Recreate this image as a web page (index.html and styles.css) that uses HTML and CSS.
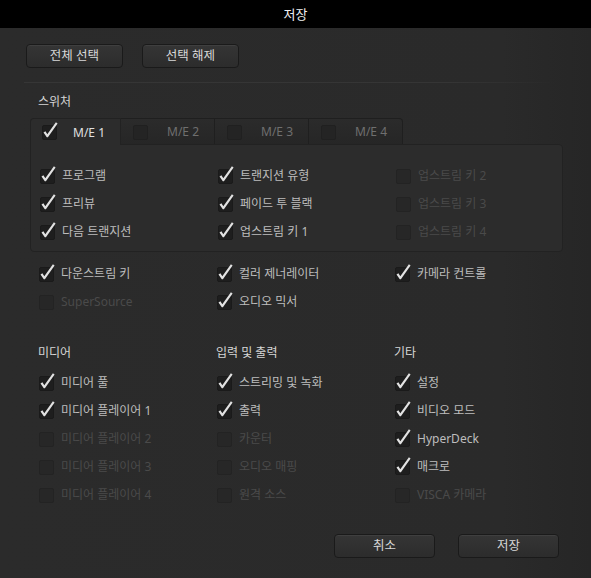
FILE: index.html
```html
<!DOCTYPE html>
<html lang="ko">
<head>
<meta charset="utf-8">
<title>저장</title>
<link rel="stylesheet" href="styles.css">
</head>
<body>
<div class="titlebar">저장</div>
<div class="content">
  <div class="top-buttons">
    <button class="btn">전체 선택</button>
    <button class="btn">선택 해제</button>
  </div>
  <div class="sep"></div>
  <div class="heading">스위처</div>
  <div class="tabs">
    <div class="tab active"><span class="cb on"><svg viewBox="0 0 15 15"><path d="M1.5 7.6 L3.4 6.2 L5.3 9.3 L13.9 -2.7 L15.6 -1.5 L5.9 12.2 L4.8 12.2 Z"/></svg></span><span class="tab-label">M/E 1</span></div>
    <div class="tab"><span class="cb"></span><span class="tab-label">M/E 2</span></div>
    <div class="tab"><span class="cb"></span><span class="tab-label">M/E 3</span></div>
    <div class="tab"><span class="cb"></span><span class="tab-label">M/E 4</span></div>
  </div>
  <div class="panel grid">
    <div class="item"><span class="cb on"><svg viewBox="0 0 15 15"><path d="M1.5 7.6 L3.4 6.2 L5.3 9.3 L13.9 -2.7 L15.6 -1.5 L5.9 12.2 L4.8 12.2 Z"/></svg></span><span class="label">프로그램</span></div>
    <div class="item"><span class="cb on"><svg viewBox="0 0 15 15"><path d="M1.5 7.6 L3.4 6.2 L5.3 9.3 L13.9 -2.7 L15.6 -1.5 L5.9 12.2 L4.8 12.2 Z"/></svg></span><span class="label">트랜지션 유형</span></div>
    <div class="item off"><span class="cb"></span><span class="label">업스트림 키 2</span></div>
    <div class="item"><span class="cb on"><svg viewBox="0 0 15 15"><path d="M1.5 7.6 L3.4 6.2 L5.3 9.3 L13.9 -2.7 L15.6 -1.5 L5.9 12.2 L4.8 12.2 Z"/></svg></span><span class="label">프리뷰</span></div>
    <div class="item"><span class="cb on"><svg viewBox="0 0 15 15"><path d="M1.5 7.6 L3.4 6.2 L5.3 9.3 L13.9 -2.7 L15.6 -1.5 L5.9 12.2 L4.8 12.2 Z"/></svg></span><span class="label">페이드 투 블랙</span></div>
    <div class="item off"><span class="cb"></span><span class="label">업스트림 키 3</span></div>
    <div class="item"><span class="cb on"><svg viewBox="0 0 15 15"><path d="M1.5 7.6 L3.4 6.2 L5.3 9.3 L13.9 -2.7 L15.6 -1.5 L5.9 12.2 L4.8 12.2 Z"/></svg></span><span class="label">다음 트랜지션</span></div>
    <div class="item"><span class="cb on"><svg viewBox="0 0 15 15"><path d="M1.5 7.6 L3.4 6.2 L5.3 9.3 L13.9 -2.7 L15.6 -1.5 L5.9 12.2 L4.8 12.2 Z"/></svg></span><span class="label">업스트림 키 1</span></div>
    <div class="item off"><span class="cb"></span><span class="label">업스트림 키 4</span></div>
  </div>
  <div class="grid extra">
    <div class="item"><span class="cb on"><svg viewBox="0 0 15 15"><path d="M1.5 7.6 L3.4 6.2 L5.3 9.3 L13.9 -2.7 L15.6 -1.5 L5.9 12.2 L4.8 12.2 Z"/></svg></span><span class="label">다운스트림 키</span></div>
    <div class="item"><span class="cb on"><svg viewBox="0 0 15 15"><path d="M1.5 7.6 L3.4 6.2 L5.3 9.3 L13.9 -2.7 L15.6 -1.5 L5.9 12.2 L4.8 12.2 Z"/></svg></span><span class="label">컬러 제너레이터</span></div>
    <div class="item"><span class="cb on"><svg viewBox="0 0 15 15"><path d="M1.5 7.6 L3.4 6.2 L5.3 9.3 L13.9 -2.7 L15.6 -1.5 L5.9 12.2 L4.8 12.2 Z"/></svg></span><span class="label">카메라 컨트롤</span></div>
    <div class="item off"><span class="cb"></span><span class="label">SuperSource</span></div>
    <div class="item"><span class="cb on"><svg viewBox="0 0 15 15"><path d="M1.5 7.6 L3.4 6.2 L5.3 9.3 L13.9 -2.7 L15.6 -1.5 L5.9 12.2 L4.8 12.2 Z"/></svg></span><span class="label">오디오 믹서</span></div>
  </div>
  <div class="grid groups">
    <div class="group">
      <div class="group-title">미디어</div>
      <div class="item"><span class="cb on"><svg viewBox="0 0 15 15"><path d="M1.5 7.6 L3.4 6.2 L5.3 9.3 L13.9 -2.7 L15.6 -1.5 L5.9 12.2 L4.8 12.2 Z"/></svg></span><span class="label">미디어 풀</span></div>
      <div class="item"><span class="cb on"><svg viewBox="0 0 15 15"><path d="M1.5 7.6 L3.4 6.2 L5.3 9.3 L13.9 -2.7 L15.6 -1.5 L5.9 12.2 L4.8 12.2 Z"/></svg></span><span class="label">미디어 플레이어 1</span></div>
      <div class="item off"><span class="cb"></span><span class="label">미디어 플레이어 2</span></div>
      <div class="item off"><span class="cb"></span><span class="label">미디어 플레이어 3</span></div>
      <div class="item off"><span class="cb"></span><span class="label">미디어 플레이어 4</span></div>
    </div>
    <div class="group">
      <div class="group-title">입력 및 출력</div>
      <div class="item"><span class="cb on"><svg viewBox="0 0 15 15"><path d="M1.5 7.6 L3.4 6.2 L5.3 9.3 L13.9 -2.7 L15.6 -1.5 L5.9 12.2 L4.8 12.2 Z"/></svg></span><span class="label">스트리밍 및 녹화</span></div>
      <div class="item"><span class="cb on"><svg viewBox="0 0 15 15"><path d="M1.5 7.6 L3.4 6.2 L5.3 9.3 L13.9 -2.7 L15.6 -1.5 L5.9 12.2 L4.8 12.2 Z"/></svg></span><span class="label">출력</span></div>
      <div class="item off"><span class="cb"></span><span class="label">카운터</span></div>
      <div class="item off"><span class="cb"></span><span class="label">오디오 매핑</span></div>
      <div class="item off"><span class="cb"></span><span class="label">원격 소스</span></div>
    </div>
    <div class="group">
      <div class="group-title">기타</div>
      <div class="item"><span class="cb on"><svg viewBox="0 0 15 15"><path d="M1.5 7.6 L3.4 6.2 L5.3 9.3 L13.9 -2.7 L15.6 -1.5 L5.9 12.2 L4.8 12.2 Z"/></svg></span><span class="label">설정</span></div>
      <div class="item"><span class="cb on"><svg viewBox="0 0 15 15"><path d="M1.5 7.6 L3.4 6.2 L5.3 9.3 L13.9 -2.7 L15.6 -1.5 L5.9 12.2 L4.8 12.2 Z"/></svg></span><span class="label">비디오 모드</span></div>
      <div class="item"><span class="cb on"><svg viewBox="0 0 15 15"><path d="M1.5 7.6 L3.4 6.2 L5.3 9.3 L13.9 -2.7 L15.6 -1.5 L5.9 12.2 L4.8 12.2 Z"/></svg></span><span class="label">HyperDeck</span></div>
      <div class="item"><span class="cb on"><svg viewBox="0 0 15 15"><path d="M1.5 7.6 L3.4 6.2 L5.3 9.3 L13.9 -2.7 L15.6 -1.5 L5.9 12.2 L4.8 12.2 Z"/></svg></span><span class="label">매크로</span></div>
      <div class="item off"><span class="cb"></span><span class="label">VISCA 카메라</span></div>
    </div>
  </div>
  <div class="bottom-buttons">
    <button class="btn wide">취소</button>
    <button class="btn wide">저장</button>
  </div>
</div>
</body>
</html>
```

FILE: styles.css
```css
* { box-sizing: border-box; }
html, body {
  margin: 0;
  padding: 0;
  width: 591px;
  height: 578px;
  overflow: hidden;
  background: #2a2a2a;
  font-family: "Noto Sans", "Noto Sans CJK KR", sans-serif;
  font-size: 12px;
  color: #c2c2c2;
}
.titlebar {
  height: 28px;
  background: #000;
  color: #f0f0f0;
  font-size: 13px;
  line-height: 28px;
  text-align: center;
}
.content {
  height: 550px;
  background: linear-gradient(90deg, #2b2b2b 0%, #2a2a2a 85%, #262626 100%);
  padding-top: 16px;
}
.top-buttons {
  display: flex;
  gap: 19px;
  padding-left: 26px;
}
.btn {
  width: 97px;
  height: 24px;
  border: 1px solid #1a1a1a;
  border-radius: 4px;
  background: linear-gradient(#353535, #2c2c2c);
  box-shadow: inset 0 1px 0 rgba(255,255,255,0.05);
  color: #d8d8d8;
  font-family: "Noto Sans", "Noto Sans CJK KR", sans-serif;
  font-size: 12.5px;
  padding: 0;
  line-height: 22px;
}
.btn.wide { width: 101px; }
.sep {
  height: 1px;
  margin: 14px 35px 0 24px;
  background: linear-gradient(90deg, #363636 0%, #353535 80%, rgba(53,53,53,0) 100%);
}
.heading {
  margin: 11px 0 0 38px;
  height: 16px;
  line-height: 16px;
  color: #d6d6d6;
}
.tabs {
  display: flex;
  margin: 8px 0 0 30px;
  height: 26px;
  position: relative;
  z-index: 1;
}
.tab {
  width: 94px;
  height: 26px;
  display: flex;
  align-items: center;
  padding-left: 11px;
  border: 1px solid #1f1f1f;
  border-bottom: none;
  border-left: none;
  background: linear-gradient(#2b2b2b, #262626);
  border-radius: 0 4px 0 0;
}
.tab:not(:last-child) { border-radius: 0; }
.tab.active {
  width: 91px;
  padding-left: 10px;
  background: #2c2c2c;
  border-left: 1px solid #222;
  border-color: #222;
  border-radius: 4px 0 0 0;
  height: 27px;
}
.tab .cb { margin-top: 1px; }
.tab-label {
  margin-left: 19px;
  color: #6f6f6f;
}
.tab.active .tab-label {
  margin-left: 16px;
  color: #e0e0e0;
}
.grid {
  display: grid;
  grid-template-columns: 178px 178px 178px;
  margin-left: 38px;
}
.panel {
  margin: 0 28px 0 30px;
  padding: 16px 0 6px 8px;
  background: #2c2c2c;
  border: 1px solid #222;
  border-radius: 0 4px 4px 4px;
}
.item {
  height: 28px;
  display: flex;
  align-items: center;
}
.cb {
  position: relative;
  flex: none;
  width: 15px;
  height: 15px;
  margin-top: 2px;
  margin-left: 1px;
  background: #1e1e1e;
  border: 1px solid #1a1a1a;
  border-radius: 2px;
}
.cb svg {
  position: absolute;
  left: -1px;
  top: -1px;
  width: 15px;
  height: 15px;
  overflow: visible;
}
.cb svg path { fill: #e2e2e2; }
.tab .cb:not(.on) { background: #242424; border-color: #202020; }
.label {
  margin-left: 7px;
  color: #bdbdbd;
  white-space: nowrap;
}
.item.off .cb { background: #272727; border-color: #232323; }
.item.off .label { color: #4a4a4a; }
.extra { margin-top: 7px; }
.groups { margin-top: 28px; }
.group-title {
  height: 20px;
  line-height: 20px;
  color: #d6d6d6;
  margin-bottom: 5px;
}
.bottom-buttons {
  display: flex;
  justify-content: flex-end;
  gap: 23px;
  margin: 26px 32px 0 0;
}
```
